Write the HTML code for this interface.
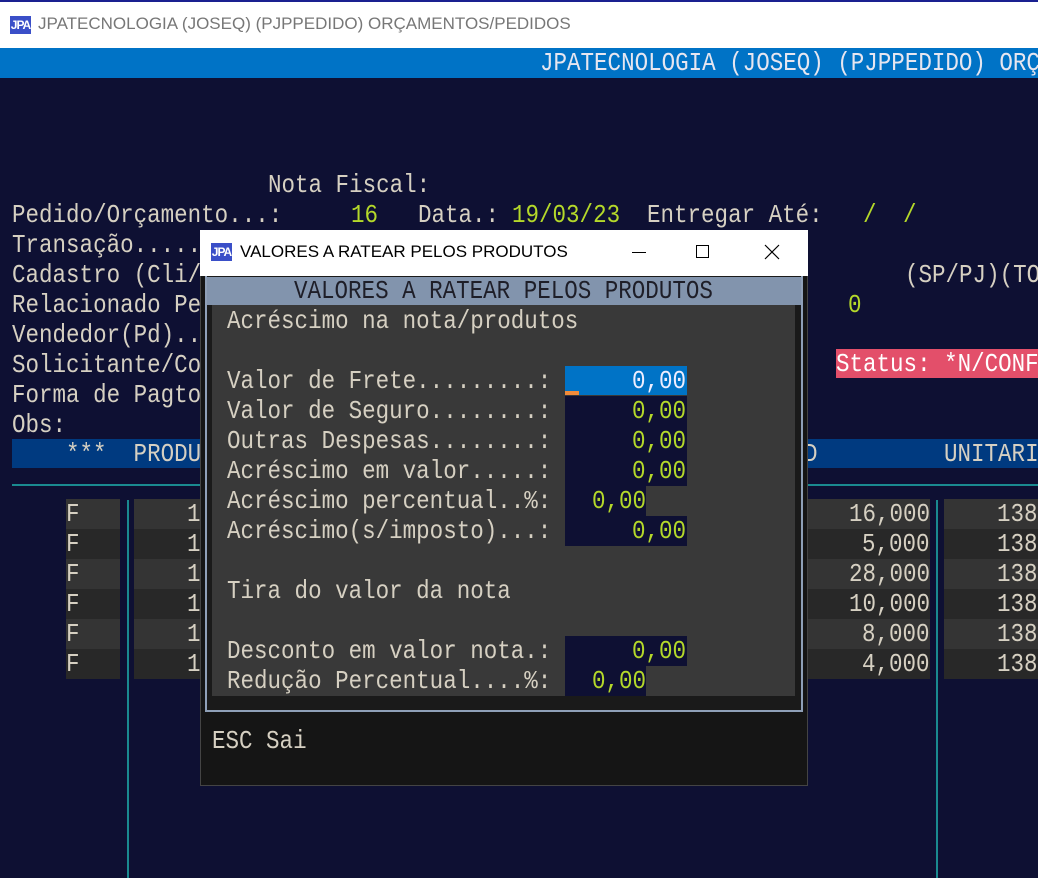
<!DOCTYPE html>
<html><head><meta charset="utf-8"><style>
*{margin:0;padding:0;box-sizing:border-box}
body{width:1038px;height:878px;overflow:hidden;background:#0e1033;position:relative;font-family:"Liberation Mono",monospace}
.a{position:absolute}
.t{position:absolute;white-space:pre;font-size:26px;line-height:30px;height:30px;color:#d6d0c2;transform:scaleX(0.866);transform-origin:left top}
.y{color:#b4d82a}
.ui{font-family:"Liberation Sans",sans-serif;position:absolute;white-space:pre}
.logo{position:absolute;width:21px;height:18px;background:#3a4fc8;color:#fff;font:bold 12px "Liberation Sans",sans-serif;line-height:18px;text-align:center;letter-spacing:-1px}
</style></head><body>
<div class="a" style="left:0;top:0;width:1038px;height:48px;background:#fff"></div>
<div class="a" style="left:0;top:0;width:1038px;height:2px;background:#1a2090"></div>
<div class="logo" style="left:10px;top:16px">JPA</div>
<div class="ui" style="left:38px;top:14px;font-size:17px;color:#777">JPATECNOLOGIA (JOSEQ) (PJPPEDIDO) ORÇAMENTOS/PEDIDOS</div>
<div class="a" style="left:0;top:48px;width:1038px;height:30px;background:#0073c6"></div>
<div class="t" style="left:540px;top:48px;color:#e6e6f0">JPATECNOLOGIA (JOSEQ) (PJPPEDIDO) ORÇ</div>

<div class="t" style="left:268px;top:170px">Nota Fiscal:</div>
<div class="t" style="left:12px;top:200px">Pedido/Orçamento...:</div>
<div class="t y" style="left:351px;top:200px">16</div>
<div class="t" style="left:418px;top:200px">Data.:</div>
<div class="t y" style="left:512px;top:200px">19/03/23</div>
<div class="t" style="left:647px;top:200px">Entregar Até:</div>
<div class="t y" style="left:863px;top:200px">/</div>
<div class="t y" style="left:903px;top:200px">/</div>
<div class="t" style="left:12px;top:230px">Transação.....</div>
<div class="t" style="left:12px;top:260px">Cadastro (Cli/</div>
<div class="t" style="left:12px;top:290px">Relacionado Pe</div>
<div class="t" style="left:12px;top:320px">Vendedor(Pd)..</div>
<div class="t" style="left:12px;top:350px">Solicitante/Co</div>
<div class="t" style="left:12px;top:380px">Forma de Pagto</div>
<div class="t" style="left:12px;top:410px">Obs:</div>
<div class="t" style="left:905px;top:260px">(SP/PJ)(TO</div>
<div class="t y" style="left:848px;top:290px">0</div>
<div class="a" style="left:836px;top:349px;width:202px;height:29px;background:#e34f6a"></div>
<div class="t" style="left:836px;top:349px;color:#fff">Status: *N/CONF</div>

<div class="a" style="left:12px;top:439px;width:1026px;height:29px;background:#003a80"></div>
<div class="t" style="left:66px;top:439px">***  PRODU</div>
<div class="t" style="left:804px;top:439px">D</div>
<div class="t" style="left:944px;top:439px">UNITARI</div>
<div class="a" style="left:12px;top:484px;width:1026px;height:2px;background:#1a8a90"></div>
<div class="a" style="left:127px;top:500px;width:2px;height:378px;background:#1a8a90"></div>
<div class="a" style="left:936px;top:500px;width:2px;height:378px;background:#1a8a90"></div>

<div class="a" style="left:66px;top:499px;width:54px;height:180px;background:linear-gradient(#343434 0 30px,#282828 30px 60px,#343434 60px 90px,#282828 90px 120px,#343434 120px 150px,#282828 150px)"></div>
<div class="a" style="left:134px;top:499px;width:70px;height:180px;background:linear-gradient(#343434 0 30px,#282828 30px 60px,#343434 60px 90px,#282828 90px 120px,#343434 120px 150px,#282828 150px)"></div>
<div class="a" style="left:800px;top:499px;width:130px;height:180px;background:linear-gradient(#343434 0 30px,#282828 30px 60px,#343434 60px 90px,#282828 90px 120px,#343434 120px 150px,#282828 150px)"></div>
<div class="a" style="left:944px;top:499px;width:94px;height:180px;background:linear-gradient(#343434 0 30px,#282828 30px 60px,#343434 60px 90px,#282828 90px 120px,#343434 120px 150px,#282828 150px)"></div>
<div class="t" style="left:66px;top:499px">F</div><div class="t" style="left:187px;top:499px">1</div>
<div class="t" style="left:66px;top:529px">F</div><div class="t" style="left:187px;top:529px">1</div>
<div class="t" style="left:66px;top:559px">F</div><div class="t" style="left:187px;top:559px">1</div>
<div class="t" style="left:66px;top:589px">F</div><div class="t" style="left:187px;top:589px">1</div>
<div class="t" style="left:66px;top:619px">F</div><div class="t" style="left:187px;top:619px">1</div>
<div class="t" style="left:66px;top:649px">F</div><div class="t" style="left:187px;top:649px">1</div>
<div class="t" style="left:849px;top:499px">16,000</div><div class="t" style="left:997px;top:499px">138</div>
<div class="t" style="left:862px;top:529px">5,000</div><div class="t" style="left:997px;top:529px">138</div>
<div class="t" style="left:849px;top:559px">28,000</div><div class="t" style="left:997px;top:559px">138</div>
<div class="t" style="left:849px;top:589px">10,000</div><div class="t" style="left:997px;top:589px">138</div>
<div class="t" style="left:862px;top:619px">8,000</div><div class="t" style="left:997px;top:619px">138</div>
<div class="t" style="left:862px;top:649px">4,000</div><div class="t" style="left:997px;top:649px">138</div>

<div class="a" style="left:200px;top:230px;width:608px;height:556px;background:#151515;border:1px solid #444"></div>
<div class="a" style="left:200px;top:230px;width:608px;height:46px;background:#fff"></div>
<div class="logo" style="left:211px;top:243px">JPA</div>
<div class="ui" style="left:240px;top:242px;font-size:17px;color:#000">VALORES A RATEAR PELOS PRODUTOS</div>
<div class="a" style="left:632px;top:252px;width:14px;height:1px;background:#000"></div>
<div class="a" style="left:696px;top:245px;width:13px;height:13px;border:1px solid #000"></div>
<svg class="a" style="left:764px;top:244px" width="16" height="16"><path d="M1 1L15 15M15 1L1 15" stroke="#000" stroke-width="1.2"/></svg>
<div class="a" style="left:205px;top:276px;width:598px;height:436px;border:2px solid #8fa0b8;border-top:none;background:#1a1a1a"></div>
<div class="a" style="left:207px;top:277px;width:594px;height:28px;background:#8294ad"></div>
<div class="t" style="left:294px;top:276px;color:#1e1e28">VALORES A RATEAR PELOS PRODUTOS</div>
<div class="a" style="left:212px;top:305px;width:583px;height:391px;background:#393939"></div>
<div class="t" style="left:227px;top:306px">Acréscimo na nota/produtos</div>
<div class="t" style="left:227px;top:366px">Valor de Frete.........:</div>
<div class="t" style="left:227px;top:396px">Valor de Seguro........:</div>
<div class="t" style="left:227px;top:426px">Outras Despesas........:</div>
<div class="t" style="left:227px;top:456px">Acréscimo em valor.....:</div>
<div class="t" style="left:227px;top:486px">Acréscimo percentual..%:</div>
<div class="t" style="left:227px;top:516px">Acréscimo(s/imposto)...:</div>
<div class="t" style="left:227px;top:576px">Tira do valor da nota</div>
<div class="t" style="left:227px;top:636px">Desconto em valor nota.:</div>
<div class="t" style="left:227px;top:666px">Redução Percentual....%:</div>

<div class="a" style="left:565px;top:366px;width:122px;height:29px;background:#0073c6"></div>
<div class="a" style="left:565px;top:391px;width:14px;height:4px;background:#f08a3a"></div>
<div class="a" style="left:565px;top:396px;width:122px;height:90px;background:#0e1033"></div>
<div class="a" style="left:565px;top:486px;width:81px;height:30px;background:#0e1033"></div>
<div class="a" style="left:565px;top:516px;width:122px;height:30px;background:#0e1033"></div>
<div class="a" style="left:565px;top:636px;width:122px;height:30px;background:#0e1033"></div>
<div class="a" style="left:565px;top:666px;width:81px;height:30px;background:#0e1033"></div>
<div class="t" style="left:632px;top:366px;color:#eef">0,00</div>
<div class="t y" style="left:632px;top:396px">0,00</div>
<div class="t y" style="left:632px;top:426px">0,00</div>
<div class="t y" style="left:632px;top:456px">0,00</div>
<div class="t y" style="left:592px;top:486px">0,00</div>
<div class="t y" style="left:632px;top:516px">0,00</div>
<div class="t y" style="left:632px;top:636px">0,00</div>
<div class="t y" style="left:592px;top:666px">0,00</div>
<div class="t" style="left:212px;top:726px">ESC Sai</div>
</body></html>
